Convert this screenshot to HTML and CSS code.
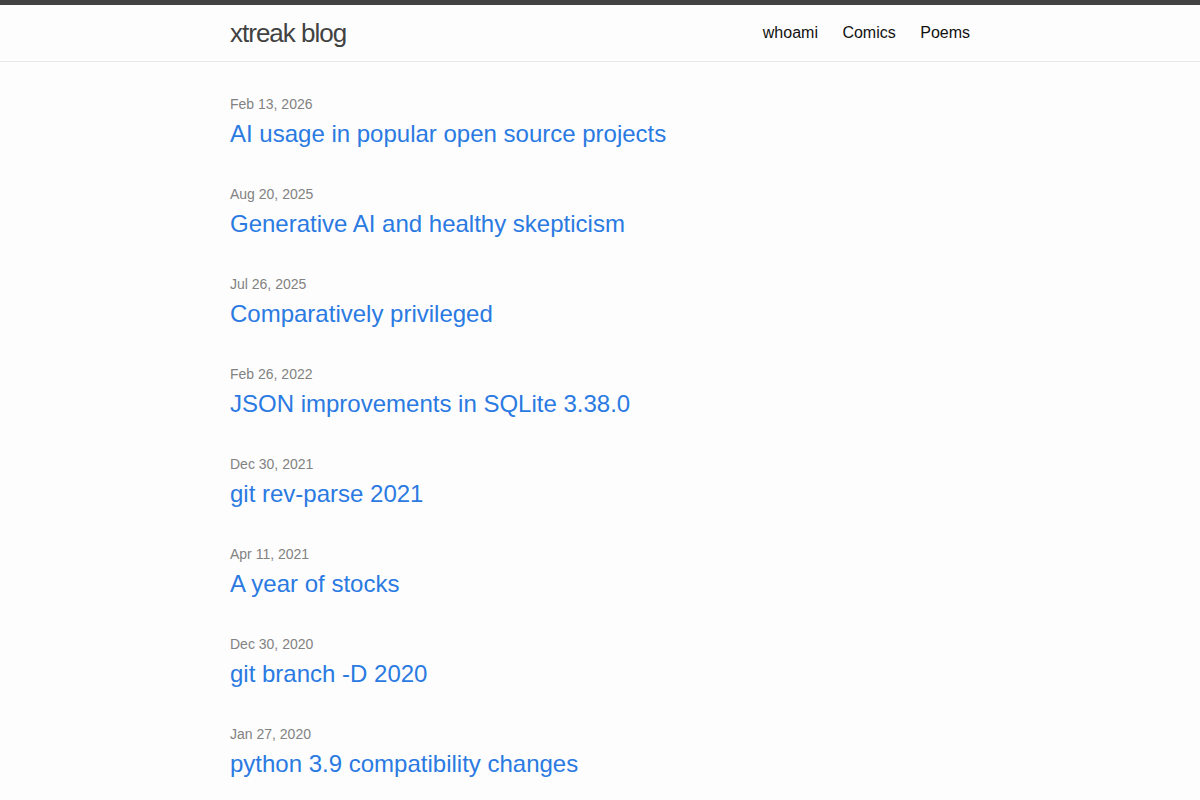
FILE: index.html
```html
<!doctype html>
<html lang="en">
<head>
	<meta charset="UTF-8">
	<title>xtreak blog</title>
	<link rel="stylesheet" href="styles.css">
</head>
<body>
	<header class="site-header">
		<div class="wrapper header-row">
			<a class="site-title" href="#">xtreak blog</a>
			<nav class="site-nav">
				<a class="page-link" href="#">whoami</a>
				<a class="page-link" href="#">Comics</a>
				<a class="page-link" href="#">Poems</a>
			</nav>
		</div>
	</header>
	<main class="page-content">
		<div class="wrapper">
			<ul class="post-list">
				<li>
					<span class="post-meta">Feb 13, 2026</span>
					<h3><a class="post-link" href="#">AI usage in popular open source projects</a></h3>
				</li>
				<li>
					<span class="post-meta">Aug 20, 2025</span>
					<h3><a class="post-link" href="#">Generative AI and healthy skepticism</a></h3>
				</li>
				<li>
					<span class="post-meta">Jul 26, 2025</span>
					<h3><a class="post-link" href="#">Comparatively privileged</a></h3>
				</li>
				<li>
					<span class="post-meta">Feb 26, 2022</span>
					<h3><a class="post-link" href="#">JSON improvements in SQLite 3.38.0</a></h3>
				</li>
				<li>
					<span class="post-meta">Dec 30, 2021</span>
					<h3><a class="post-link" href="#">git rev-parse 2021</a></h3>
				</li>
				<li>
					<span class="post-meta">Apr 11, 2021</span>
					<h3><a class="post-link" href="#">A year of stocks</a></h3>
				</li>
				<li>
					<span class="post-meta">Dec 30, 2020</span>
					<h3><a class="post-link" href="#">git branch -D 2020</a></h3>
				</li>
				<li>
					<span class="post-meta">Jan 27, 2020</span>
					<h3><a class="post-link" href="#">python 3.9 compatibility changes</a></h3>
				</li>
			</ul>
		</div>
	</main>
</body>
</html>
```

FILE: styles.css
```css
body {
  margin: 0;
  font: 400 16px/1.5 "Liberation Sans", Arial, sans-serif;
  color: #111;
  background-color: #fdfdfd;
}

a {
  text-decoration: none;
}

.wrapper {
  max-width: 740px;
  margin-left: auto;
  margin-right: auto;
  padding-left: 30px;
  padding-right: 30px;
}

.site-header {
  border-top: 5px solid #424242;
  border-bottom: 1px solid #e8e8e8;
  min-height: 55.95px;
}

.header-row {
  display: flex;
  justify-content: space-between;
  padding-top: 1px;
}

.site-title {
  font-size: 26px;
  font-weight: 300;
  line-height: 54px;
  letter-spacing: -1px;
  color: #424242;
}

.site-nav {
  line-height: 54px;
}

.page-link {
  color: #111;
}

.page-link + .page-link {
  margin-left: 20px;
}

.page-content {
  padding: 30px 0;
}

.post-list {
  margin: 0;
  padding: 0;
  list-style: none;
}

.post-list li {
  margin-bottom: 30px;
}

.post-list h3 {
  margin: 0 0 15px;
  font-size: 24px;
  font-weight: 400;
  line-height: 1.5;
}

.post-meta {
  font-size: 14px;
  color: #828282;
}

.post-link {
  display: block;
  color: #2a7ae2;
}
```
